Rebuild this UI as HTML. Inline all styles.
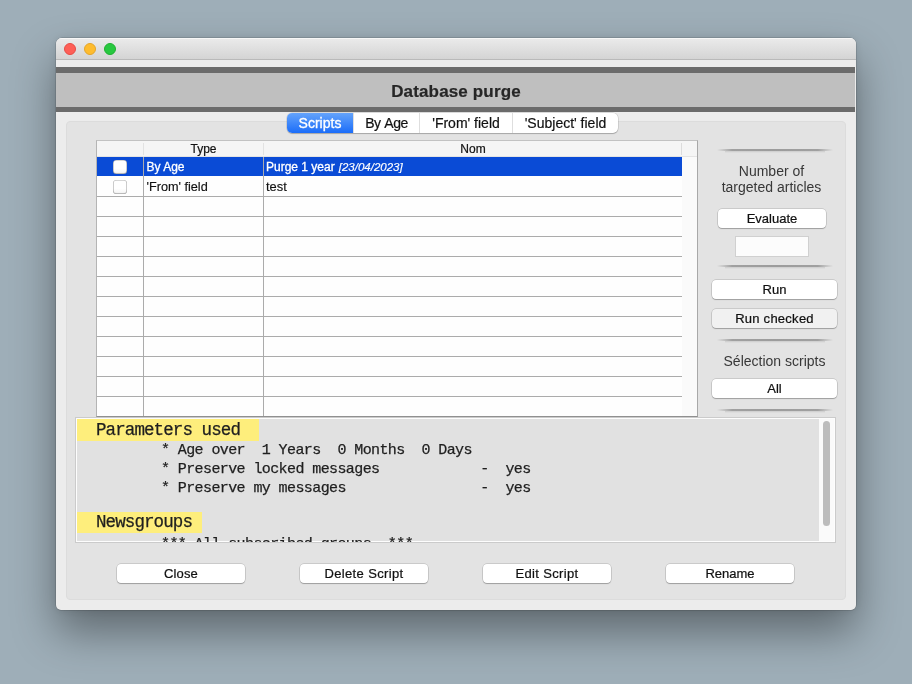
<!DOCTYPE html>
<html><head><meta charset="utf-8">
<style>
*{box-sizing:border-box;margin:0;padding:0}
html,body{width:912px;height:684px;overflow:hidden}
body{font-family:"Liberation Sans",sans-serif;font-size:13px;color:#222;
 background:#9eaeb8;position:relative}
.abs{position:absolute}
#win{will-change:transform;left:56px;top:38px;width:800px;height:572px;background:#ececec;border-radius:6px 6px 5px 5px;
 box-shadow:0 0 0 0.5px rgba(0,0,0,.22),0 22px 44px rgba(0,0,0,.40),0 0 10px rgba(0,0,0,.10);overflow:hidden}
#tbar{left:0;top:0;width:800px;height:22px;background:linear-gradient(#ebebeb,#d4d4d4);border-bottom:1px solid #b9b9b9;box-shadow:inset 0 1px 0 #f7f7f7}
.tl{width:12px;height:12px;border-radius:50%;top:5px}
#band1{left:0;top:29px;width:799px;height:6px;background:#6b6b6b}
#band{left:0;top:35px;width:799px;height:34px;background:#bfbfbf}
#band2{left:0;top:69px;width:799px;height:5px;background:#6b6b6b}
#title{left:0;top:44px;width:800px;text-align:center;font-weight:bold;font-size:17px;color:#262626;letter-spacing:.15px;-webkit-text-stroke:.2px #262626}
#panel{left:10px;top:83px;width:780px;height:479px;background:#e3e3e3;border:1px solid #dcdcdc;border-radius:4px}
#tabs{left:231px;top:74.5px;width:331px;height:20px;background:#fff;border-radius:5px;box-shadow:0 0 0 .5px rgba(0,0,0,.16),0 1px 1px rgba(0,0,0,.2);display:flex;overflow:hidden;font-size:14px}
#tabs div{height:20px;line-height:20px;-webkit-text-stroke:.2px #111;text-align:center;border-left:1px solid #dedede;color:#111}
#tabs div.sel{background:linear-gradient(#64a3fb,#1b6df9);color:#fff;border-left:none;-webkit-text-stroke:.3px #fff}
#table{left:40px;top:102px;width:602px;height:277px;background:#fefefe;border:1px solid #b4b4b4;border-top-color:#c2c2c2;border-bottom-color:#909090;border-right-color:#a8a8a8}
#thead{left:0;top:0;width:600px;height:16px;background:#f5f5f5}
.hl{height:1px;background:#ababab;left:0;width:585px}
.vl{width:1px;background:#ababab;top:16px;height:259px}
.btn{background:#fff;border-radius:4px;box-shadow:0 0 0 .5px rgba(0,0,0,.22),0 1px 1px rgba(0,0,0,.22);text-align:center;font-size:14px;color:#111;height:19px;line-height:19px;-webkit-text-stroke:.22px #111}
.sep{height:2px;background:linear-gradient(90deg,rgba(150,150,150,0),#a0a0a0 13%,#9c9c9c 50%,#a0a0a0 87%,rgba(150,150,150,0));width:116px;left:661px}
.sep:after{content:'';position:absolute;left:8px;right:8px;top:2px;height:2px;background:linear-gradient(rgba(0,0,0,.10),rgba(0,0,0,0))}
.mono{font-family:"Liberation Mono",monospace;font-size:15px;letter-spacing:-0.6px;color:#1f1f1f;white-space:pre;-webkit-text-stroke:.25px #1f1f1f}
.lab{font-size:14px;color:#383838;text-align:center}
.cb{width:14px;height:14px;background:linear-gradient(#fff 60%,#f3f3f3);border-radius:3.5px;box-shadow:inset 0 0 0 .6px rgba(0,0,0,.32),inset 0 -1px 1px rgba(0,0,0,.1)}
</style></head><body>
<div id="win" class="abs">
 <div id="tbar" class="abs"></div>
 <div class="abs tl" style="left:8px;background:#fe5f57;border:1px solid #e64c45"></div>
 <div class="abs tl" style="left:28px;background:#febc2e;border:1px solid #e3a52a"></div>
 <div class="abs tl" style="left:48px;background:#28c840;border:1px solid #1fb030"></div>
 <div id="band1" class="abs"></div><div id="band" class="abs"></div><div id="band2" class="abs"></div>
 <div id="title" class="abs">Database purge</div>
 <div id="panel" class="abs"></div>
 <div id="tabs" class="abs">
  <div class="sel" style="width:66px">Scripts</div><div style="width:66px;letter-spacing:-.5px;word-spacing:1.2px">By Age</div><div style="width:93px">'From' field</div><div style="width:106px">'Subject' field</div>
 </div>
 <div id="table" class="abs">
  <div id="thead" class="abs"></div>
  <div class="abs" style="left:0;top:15px;width:600px;height:1px;background:#e4e4e4"></div>
  <div class="abs" style="left:585px;top:16px;width:15px;height:259px;background:#fafafa"></div>
  <div class="abs" style="left:46px;top:2px;width:1px;height:12px;background:#e2e2e2"></div>
  <div class="abs" style="left:166px;top:2px;width:1px;height:12px;background:#e2e2e2"></div>
  <div class="abs" style="left:584px;top:2px;width:1px;height:12px;background:#dcdcdc"></div>
  <div class="abs" style="left:0;top:16px;width:585px;height:19px;background:#0a4bd6"></div>
  <div class="abs" style="left:47px;top:1px;width:119px;text-align:center;font-size:12px;line-height:15px;color:#111;-webkit-text-stroke:.2px #111">Type</div>
  <div class="abs" style="left:167px;top:1px;width:418px;text-align:center;font-size:12px;line-height:15px;color:#111;-webkit-text-stroke:.2px #111">Nom</div>
  <div class="abs" style="left:49.5px;top:16px;font-size:12px;line-height:20px;color:#fff;-webkit-text-stroke:.3px #fff">By Age</div>
  <div class="abs" style="left:169px;top:16px;font-size:12px;line-height:20px;color:#fff;-webkit-text-stroke:.3px #fff;white-space:nowrap">Purge 1 year<i style="font-size:11.5px;margin-left:4px;-webkit-text-stroke:.15px #fff">[23/04/2023]</i></div>
  <div class="abs" style="left:49.5px;top:36px;font-size:12.7px;line-height:20px;color:#111;-webkit-text-stroke:.15px #111">'From' field</div>
  <div class="abs" style="left:169px;top:36px;font-size:12.9px;line-height:20px;color:#111;-webkit-text-stroke:.15px #111">test</div>
  <div class="abs cb" style="left:16px;top:19px"></div>
  <div class="abs cb" style="left:16px;top:39px"></div>
  <div class="abs hl" style="top:55px"></div><div class="abs hl" style="top:75px"></div><div class="abs hl" style="top:95px"></div><div class="abs hl" style="top:115px"></div><div class="abs hl" style="top:135px"></div><div class="abs hl" style="top:155px"></div><div class="abs hl" style="top:175px"></div><div class="abs hl" style="top:195px"></div><div class="abs hl" style="top:215px"></div><div class="abs hl" style="top:235px"></div><div class="abs hl" style="top:255px"></div>
  <div class="abs vl" style="left:46px"></div><div class="abs vl" style="left:166px"></div>
 </div>
 <!-- right column -->
 <div class="abs sep" style="top:111px"></div>
 <div class="abs lab" style="left:649.5px;top:124.5px;width:132px;line-height:16px">Number of<br>targeted articles</div>
 <div class="abs btn" style="left:662px;top:171px;width:108px;font-size:13px">Evaluate</div>
 <div class="abs" style="left:679px;top:198px;width:74px;height:21px;background:#fcfcfc;border:1px solid #d0d0d0"></div>
 <div class="abs sep" style="top:227px"></div>
 <div class="abs btn" style="left:656px;top:242px;width:125px;font-size:13px">Run</div>
 <div class="abs btn" style="left:656px;top:271px;width:125px;background:#f1f1f1;font-size:13px;letter-spacing:.26px">Run checked</div>
 <div class="abs sep" style="top:301px"></div>
 <div class="abs lab" style="left:650.5px;top:315px;width:136px;line-height:16px">Sélection scripts</div>
 <div class="abs btn" style="left:656px;top:341px;width:125px;font-size:13px">All</div>
 <div class="abs sep" style="top:371px"></div>
 <!-- text area -->
 <div class="abs" style="left:19px;top:379px;width:761px;height:126px;background:#e1e1e1;border:1px solid #cbcbcb;overflow:hidden">
  <div class="abs" style="left:0;top:0;width:759px;height:124px;border:1px solid #fdfdfd"></div>
  <div class="abs" style="left:1px;top:1px;width:182px;height:22px;background:#feee7c"></div>
  <div class="abs" style="left:1px;top:94px;width:125px;height:21px;background:#feee7c"></div>
  <div class="abs mono" style="left:20px;top:1px;font-size:17.5px;letter-spacing:-0.9px;line-height:22px">Parameters used</div>
  <div class="abs mono" style="left:85px;top:23px;line-height:19px">* Age over  1 Years  0 Months  0 Days
* Preserve locked messages            -  yes
* Preserve my messages                -  yes</div>
  <div class="abs mono" style="left:20px;top:93px;font-size:17.5px;letter-spacing:-0.9px;line-height:22px">Newsgroups</div>
  <div class="abs mono" style="left:85px;top:117px;line-height:19px">*** All subscribed groups  ***</div>
  <div class="abs" style="left:743px;top:1px;width:15px;height:122px;background:#fafafa"></div>
  <div class="abs" style="left:747px;top:3px;width:7px;height:105px;background:#bcbcbc;border-radius:3.5px"></div>
 </div>
 <!-- bottom buttons -->
 <div class="abs btn" style="left:61px;top:526px;width:128px;font-size:13px;letter-spacing:.16px">Close</div>
 <div class="abs btn" style="left:244px;top:526px;width:128px;font-size:13px;letter-spacing:.36px">Delete Script</div>
 <div class="abs btn" style="left:427px;top:526px;width:128px;font-size:13px;letter-spacing:.36px">Edit Script</div>
 <div class="abs btn" style="left:610px;top:526px;width:128px;font-size:13px">Rename</div>
</div>
</body></html>
